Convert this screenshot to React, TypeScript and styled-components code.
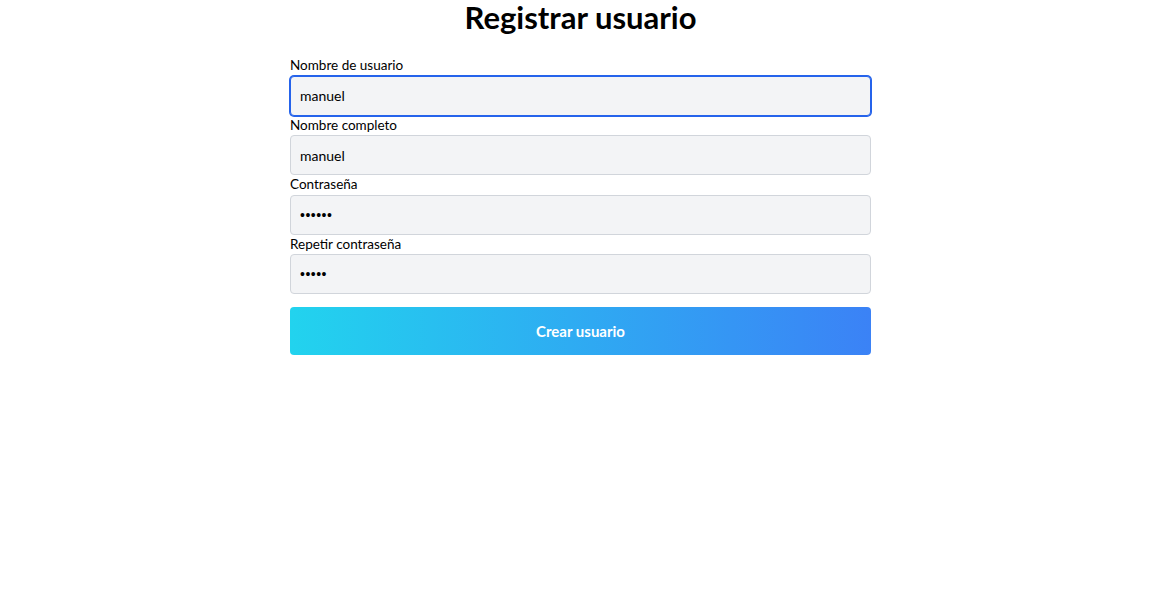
import React from "react";
import styled, { createGlobalStyle } from "styled-components";

const Global = createGlobalStyle`
  html, body { margin: 0; padding: 0; background: #ffffff; }
  body { font-family: Lato, "Liberation Sans", sans-serif; color: #000; }
  * { box-sizing: border-box; }
`;

const Page = styled.main`
  display: flex;
  flex-direction: column;
  align-items: center;
  padding-left: 6px;
`;

const Title = styled.h1`
  margin: 0 0 22px;
  font-size: 31px;
  line-height: 34px;
  font-weight: 700;
`;

const Form = styled.form`
  width: 581px;
  display: flex;
  flex-direction: column;
`;

const Field = styled.div`
  display: flex;
  flex-direction: column;
`;

const Label = styled.label`
  font-size: 13.5px;
  line-height: 19.5px;
`;

const Input = styled.input<{ $active?: boolean; $secret?: boolean }>`
  height: 40px;
  width: 100%;
  padding: 0 9px;
  font-family: ${(p) => (p.$secret ? '"Liberation Sans", sans-serif' : "inherit")};
  font-size: 14px;
  letter-spacing: ${(p) => (p.$secret ? "0.5px" : "normal")};
  color: #000;
  background: #f3f4f6;
  border: 1px solid ${(p) => (p.$active ? "#2563eb" : "#d1d5db")};
  box-shadow: ${(p) => (p.$active ? "0 0 0 1px #2563eb" : "none")};
  border-radius: 4px;
  outline: none;
`;

const Button = styled.button`
  margin-top: 13px;
  height: 48px;
  border: none;
  border-radius: 4px;
  background: linear-gradient(to right, #22d3ee, #3b82f6);
  color: #fff;
  font-family: inherit;
  font-size: 15px;
  font-weight: 700;
  cursor: pointer;
`;

const fields = [
  { label: "Nombre de usuario", type: "text", value: "manuel", active: true },
  { label: "Nombre completo", type: "text", value: "manuel" },
  { label: "Contraseña", type: "password", value: "123456" },
  { label: "Repetir contraseña", type: "password", value: "12345" },
];

export default function App() {
  return (
    <>
      <Global />
      <Page>
        <Title>Registrar usuario</Title>
        <Form onSubmit={(e) => e.preventDefault()}>
          {fields.map((f, i) => (
            <Field key={f.label}>
              <Label htmlFor={`f${i}`}>{f.label}</Label>
              <Input
                id={`f${i}`}
                type={f.type}
                defaultValue={f.value}
                $active={f.active}
                $secret={f.type === "password"}
                autoFocus={f.active}
              />
            </Field>
          ))}
          <Button type="submit">Crear usuario</Button>
        </Form>
      </Page>
    </>
  );
}
